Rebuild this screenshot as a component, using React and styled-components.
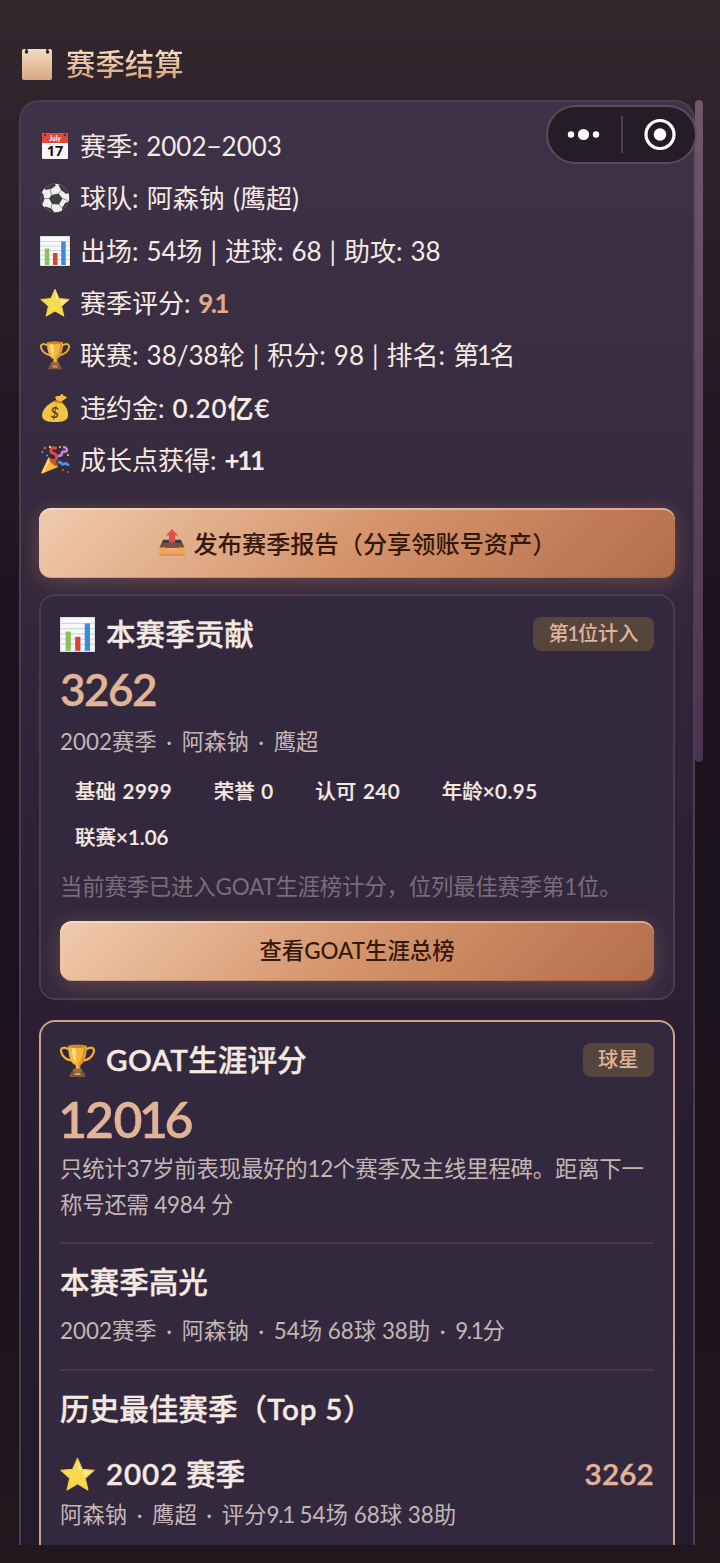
import React from 'react';
import styled, { createGlobalStyle } from 'styled-components';

const GlobalStyle = createGlobalStyle`
  * { box-sizing: border-box; }

  body {
    margin: 0;
    background: #21161d;
    font-family: Lato, 'Noto Sans CJK SC', sans-serif;
    color: #f6e9e2;
    -webkit-font-smoothing: antialiased;
  }
`;

const Page = styled.div`
  height: 1563px;
  padding: 42px 17px 18px 19px;
  display: flex;
  flex-direction: column;
  overflow: hidden;
  background: linear-gradient(180deg, #33272e 0%, #2f232b 8%, #241a24 24%, #1c131e 40%, #1a121d 62%, #1e131c 82%, #23171e 100%);
`;

const PageTitle = styled.h1`
  display: flex;
  align-items: center;
  gap: 14px;
  height: 44px;
  margin: 0 0 14px 3px;
  font-size: 29.4px;
  font-weight: 500;
  line-height: 44px;

  span {
    background: linear-gradient(180deg, #f6dcc0 20%, #d9a27e 85%);
    background-clip: text;
    color: transparent;
  }
`;

const Body = styled.div`
  flex: 1;
  min-height: 0;
  display: flex;
`;

const Panel = styled.main`
  width: 676px;
  padding: 18px 18px 0;
  overflow: hidden;
  border: 2px solid #4a3e50;
  border-bottom: 0;
  border-radius: 20px 20px 0 0;
  background: linear-gradient(180deg, #3d3247 0%, #382c41 22%, #33273c 35%, #2f2036 50%, #2b1e32 64%, #261b30 80%, #241b2e 100%);
`;

const ScrollThumb = styled.div`
  width: 8px;
  height: 662px;
  border-radius: 4px;
  background: linear-gradient(180deg, #73566b, #4b3250);
`;

const Capsule = styled.div`
  position: absolute;
  top: 105px;
  left: 546px;
  width: 151px;
  height: 59px;
  border: 2px solid #584d5a;
  border-radius: 30px;
  background: #241d27;
`;

const StatList = styled.ul`
  list-style: none;
  margin: 0;
  padding: 0 0 0 1px;
`;

const StatRow = styled.li`
  display: flex;
  align-items: center;
  gap: 10px;
  height: 52.3px;
  font-size: 26px;
  line-height: 52px;
  white-space: pre;
  word-spacing: ${(p) => p.$space}px;
`;

const Strong = styled.b`
  font-weight: ${(p) => p.$weight || 700};
  color: ${(p) => p.$color || 'inherit'};
  letter-spacing: ${(p) => p.$track || 0}px;
`;

/* latin glyphs inside chinese text, a step heavier than their neighbours */
const Num = styled.span`
  font-weight: 600;
  letter-spacing: ${(p) => p.$track || 0}px;
`;

const Track = styled.span`
  letter-spacing: ${(p) => p.$by}px;
`;

const One = styled.span`
  margin: 0 ${(p) => p.$by}px;
`;

const Button = styled.button`
  display: flex;
  align-items: center;
  justify-content: center;
  gap: 8px;
  width: 100%;
  height: ${(p) => p.$height}px;
  margin: ${(p) => p.$margin};
  padding: 0 0 ${(p) => p.$lift}px;
  border: 0;
  border-radius: 12px;
  font-family: inherit;
  font-size: ${(p) => p.$size}px;
  font-weight: 500;
  color: #35180c;
  background: linear-gradient(135deg, #f0cbae 0%, #d5946b 50%, #b46d4a 100%);
  box-shadow: 0 6px 26px rgba(213, 148, 107, 0.24), 0 0 20px rgba(213, 148, 107, 0.1),
    inset 0 2px 0 rgba(255, 240, 230, 0.42), inset 0 -1px 0 rgba(120, 60, 50, 0.2);
`;

const Card = styled.section`
  height: ${(p) => p.$height}px;
  margin-bottom: 20px;
  padding: 14px 19px 0;
  border: 2px solid ${(p) => (p.$accent ? '#cfa28a' : '#493c4e')};
  border-radius: 16px;
  background: ${(p) => (p.$accent ? '#33293e' : 'rgba(51, 42, 64, 0.88)')};
`;

const CardHead = styled.header`
  display: flex;
  align-items: center;
  justify-content: space-between;
  height: ${(p) => p.$height || 48}px;
  margin-top: ${(p) => p.$top || 0}px;
`;

const Heading = styled.h2`
  display: flex;
  align-items: center;
  gap: 11px;
  margin: 0;
  font-size: 29.6px;
  font-weight: 500;
  line-height: 44px;
  white-space: pre;
  -webkit-text-stroke: 0.35px currentColor;
`;

const Badge = styled.span`
  height: 34px;
  padding: 0 15.5px;
  border-radius: 8px;
  font-size: 20.2px;
  font-weight: 500;
  line-height: 32px;
  color: #e2b497;
  background: #55453d;
`;

const Score = styled.div`
  height: ${(p) => p.$height}px;
  margin-bottom: ${(p) => p.$gap || 0}px;
  font-size: ${(p) => p.$size}px;
  line-height: ${(p) => p.$height}px;
  font-weight: 600;
  letter-spacing: ${(p) => p.$track}px;
  color: #e2b497;
  -webkit-text-stroke: 0.4px currentColor;
`;

const Text = styled.p`
  margin: ${(p) => p.$margin || 0};
  font-size: 22.4px;
  line-height: 36px;
  letter-spacing: ${(p) => p.$track || 0}px;
  white-space: pre;
  color: ${(p) => (p.$muted ? '#7c6c7a' : '#c5b6b5')};
`;

const Middot = styled.span`
  margin: 0 3.8px;
`;

const Chips = styled.div`
  display: flex;
  flex-wrap: wrap;
  column-gap: 11.6px;
  row-gap: 12px;
  margin-top: 14px;
`;

const Chip = styled.span`
  padding: 0 15px;
  font-size: 20.5px;
  font-weight: 500;
  line-height: 34px;
  word-spacing: 1.4px;
  -webkit-text-stroke: 0.2px currentColor;
`;

const Divider = styled.hr`
  height: 2px;
  margin: ${(p) => p.$margin};
  border: 0;
  background: #43384d;
`;

const Svg = ({ size = 30, children }) => (
  <svg width={size} height={size} viewBox="0 0 30 30" fill="none">
    {children}
  </svg>
);

const CalendarGold = () => (
  <svg width="30" height="32" viewBox="0 0 30 32">
    <defs>
      <linearGradient id="gold" x1="0" y1="0" x2="0" y2="1">
        <stop offset="0" stopColor="#f3dcc0" />
        <stop offset="1" stopColor="#dba783" />
      </linearGradient>
    </defs>
    <rect y="1" width="30" height="31" rx="2" fill="url(#gold)" />
    <path d="M4.5 0v3M25.5 0v3" stroke="#33262d" strokeWidth="2" />
    <circle cx="4.5" cy="4" r="1.8" fill="#33262d" />
    <circle cx="25.5" cy="4" r="1.8" fill="#33262d" />
  </svg>
);

const Calendar = () => (
  <Svg>
    <rect x="2" y="2" width="26" height="26" rx="1" fill="#f8f6f7" />
    <path d="M2 3a1 1 0 0 1 1-1h24a1 1 0 0 1 1 1v9H2z" fill="#df493e" />
    <circle cx="5" cy="4" r="1.3" fill="#7e2826" />
    <circle cx="25" cy="4" r="1.3" fill="#7e2826" />
    <text x="15" y="9.6" fontSize="6.5" fontWeight="700" textAnchor="middle" fill="#fff">July</text>
    <text x="15" y="25" fontSize="14.5" fontWeight="700" fontFamily="Open Sans" textAnchor="middle" fill="#161318">17</text>
  </Svg>
);

const Ball = () => (
  <Svg>
    <defs>
      <clipPath id="ball"><circle cx="15" cy="15" r="14.4" /></clipPath>
    </defs>
    <g clipPath="url(#ball)">
      <circle cx="15" cy="15" r="14.4" fill="#f1eff1" />
      <path d="M11.500 12l7-1.500 4 5-3.500 6-7-.5-3-5.500z" fill="#403f42" />
      <path d="M4 5l5-4.500 5-.5 2 2.500-4 3L6 7zM18 1l7 2 4 7-3 1-5-4zM0 11l3-1 1.500 6-2 5L0 20zM5.500 23.500l6 2 3 4-7 1-5-5zM22 25l3-5 4.500-2-1 7-6 5z" fill="#403f42" />
      <path d="M11.500 12L10 6M18.500 10.500L21.500 7M22.500 15.500l5 2M19 21.500l3 3.500M12 21l-1 4.500M9 15.500H4" stroke="#8f8c90" />
    </g>
  </Svg>
);

const Chart = ({ size }) => (
  <Svg size={size}>
    <rect x=".5" y=".5" width="29" height="29" fill="#fafafa" />
    <path d="M1 5.500h28M1 10h28M1 14.500h28M1 19h28M1 23.500h28" stroke="#cfd8dc" />
    <path d="M.5 .5h29v29H.5z" stroke="#dde1e5" />
    <rect x="4.800" y="12.500" width="4.500" height="16.500" fill="#8fbe5c" />
    <rect x="13" y="17" width="4.500" height="12" fill="#d9423b" />
    <rect x="21.200" y="5.500" width="4.500" height="23.500" fill="#3d8bdb" />
  </Svg>
);

const Star = ({ size }) => (
  <Svg size={size}>
    <path d="M15 1.200l4.100 9.300 10.100 1-7.600 6.700 2.300 10L15 23l-8.900 5.200 2.300-10L.8 11.500l10.100-1z" fill="#f8da4e" stroke="#f5cb3f" strokeWidth="1" strokeLinejoin="round" />
    <path d="M15.500 3.500l2.800 7.600c-1.500 2-2.500-.5-2.800-7.600z" fill="#fff4ae" />
    <path d="M19.500 11.500l8.500.5-6.800 5.500z" fill="#fbe98a" />
  </Svg>
);

const Trophy = ({ size }) => (
  <Svg size={size}>
    <path d="M7.500 5.500C3 2.500 0 4.500 1.200 8.200c1 3.200 4 6 9 7M22.500 5.500c4.500-3 7.500-1 6.300 2.700-1 3.200-4 6-9 7" stroke="#f0ad36" strokeWidth="1.900" />
    <path d="M7 2.500c0 10 3 15.500 6.500 16.500v5h3v-5C20 18 23 12.500 23 2.500z" fill="#f5b43c" />
    <path d="M10 4.500c.2 6 1.500 10 3.200 12 .8-2 .8-8 .3-12z" fill="#fbdc86" />
    <path d="M20 4c0 7-2 11-4 13.500v5l1.500-.5v-3C20.500 17 22 12 22 4z" fill="#df8f27" />
    <ellipse cx="15" cy="2.700" rx="8" ry="1.500" fill="#cf8526" />
    <path d="M11.500 22h7l1 3h-9z" fill="#9a6847" />
    <path d="M9.500 25h11l1.500 4.200H8z" fill="#825340" />
    <rect x="12.500" y="25.500" width="5" height="2" fill="#d9a34a" />
  </Svg>
);

const MoneyBag = () => (
  <Svg>
    <path d="M15 4c2-2 4.500 0 5.500-2 1.200-1.800 3-1 3 1 2.500-.5 4 1 2.500 2.500-2 1-2.500 2-5.500 3.500l-4-1.500z" fill="#f3bd3d" />
    <path d="M14.500 8l7 1.500C26 12.500 28.500 18 28 23c-.5 5-6 6-13 6S2 28 2 22.500C2 16.500 8 11 14.500 8z" fill="#f6c445" />
    <path d="M14.500 8.500l7.500 1.300" stroke="#d18f28" strokeWidth="1.800" strokeLinecap="round" />
    <text x="14.500" y="25" fontSize="15" fontWeight="600" textAnchor="middle" fill="#5d4428" transform="rotate(6 14.500 20)">$</text>
  </Svg>
);

const Party = () => (
  <Svg>
    <path d="M8.500 12.500C12 13 17.500 18 18 22L2.500 28.500c-1 .3-1.600-.4-1.200-1.300z" fill="#f6b73c" />
    <path d="M8.500 12.500l2 2-6 12.500-3 1.200z" fill="#fbd674" />
    <path d="M9 13c3-1 9 5 8.500 8.500-4-.5-8-4.500-8.500-8.500z" fill="#a9622d" />
    <path d="M13 16c4-1 5-5 2-7-3-1.500-5-1-4-4 1-2.500 4-3 5.500-1" stroke="#df4b42" strokeWidth="3" />
    <path d="M18 11c3 0 4-1 4-3 0-3 4 0 5-2.500 0-2-2-3.500-4-3.500" stroke="#c78bd6" strokeWidth="2.600" />
    <path d="M18 18c3-3 3.500 3 6 1s3 2 5 0" stroke="#3e9be0" strokeWidth="2.800" />
    <g fill="#4da7e6"><circle cx="2.500" cy="7" r="1.100" /><circle cx="7" cy="10.500" r="1" /></g>
    <g fill="#e65249"><circle cx="5" cy="3" r="1.300" /><circle cx="23" cy="25" r="1.100" /><circle cx="28" cy="27" r="1" /></g>
    <g fill="#f4cd48"><circle cx="10" cy="2" r="1.200" /><circle cx="28" cy="10" r="1.100" /><circle cx="20" cy="2" r="1" /></g>
  </Svg>
);

const Outbox = () => (
  <Svg size={28}>
    <path d="M5.500 12.500h19l4 9h-27z" fill="#463b3a" />
    <path d="M5 16h20l3 5.500H2z" fill="#7b5240" />
    <path d="M1 21h7.500l2.500 3h8l2.500-3H29v8.500H1z" fill="#f0a45c" />
    <path d="M1 28h28v1.500H1z" fill="#db8b49" />
    <path d="M15 1l6.500 7h-3.300v7.500h-6.400V8H8.500z" fill="#df5148" />
  </Svg>
);

const CapsuleIcons = () => (
  <svg width="147" height="55" viewBox="548 107 147 55" fill="#fff">
    <circle cx="571" cy="134.500" r="3.200" />
    <circle cx="583.500" cy="134.500" r="5.600" />
    <circle cx="596" cy="134.500" r="3.200" />
    <rect x="621" y="116" width="2" height="37" fill="#4b424e" />
    <circle cx="660" cy="134.500" r="14" fill="none" stroke="#fff" strokeWidth="3.200" />
    <circle cx="660" cy="134.500" r="6.200" />
  </svg>
);

const Dot = () => <Middot> · </Middot>;

const App = () => {
  const stats = [
    { icon: <Calendar />, space: 1, text: <>赛季: 2002−2003</> },
    { icon: <Ball />, space: 1.6, text: <>球队: 阿森钠 (鹰超)</> },
    { icon: <Chart />, space: 1.3, text: <>出场: 54场 | 进球: 68 | 助攻: 38</> },
    { icon: <Star />, space: 1, text: <>赛季评分: <Strong $color="#e0ab8d" $track={-2.4}>9.1</Strong></> },
    { icon: <Trophy />, space: 1.4, text: <>联赛: 38/38轮 | 积分: 98 | 排名: 第<One $by={-2.4}>1</One>名</> },
    { icon: <MoneyBag />, space: 1.4, text: <>违约金: <Strong $weight={600} $track={0.9}>0.20亿€</Strong></> },
    { icon: <Party />, space: 1.4, text: <>成长点获得: <Strong $track={-2.4}>+11</Strong></> },
  ];
  const chips = [
    ['基础 ', '2999'],
    ['荣誉 ', '0'],
    ['认可 ', '240'],
    ['年龄', '×0.95'],
    ['联赛', '×1.06', 0],
  ];

  return (
    <Page>
      <GlobalStyle />
      <PageTitle>
        <CalendarGold />
        <span>赛季结算</span>
      </PageTitle>

      <Body>
        <Panel>
          <StatList>
            {stats.map((row, i) => (
              <StatRow key={i} $space={row.space}>
                {row.icon}
                <div>{row.text}</div>
              </StatRow>
            ))}
          </StatList>

          <Button $height={70} $size={24.2} $lift={2} $margin="22px 0 16px">
            <Outbox />
            发布赛季报告（分享领账号资产）
          </Button>

          <Card $height={406}>
            <CardHead>
              <Heading><Chart size={35} />本赛季贡献</Heading>
              <Badge>第<One $by={-1.3}>1</One>位计入</Badge>
            </CardHead>
            <Score $height={62} $gap={4} $size={44} $track={-1.5}>3262</Score>
            <Text>2002赛季<Dot />阿森钠<Dot />鹰超</Text>
            <Chips>
              {chips.map(([label, value, track = 0.5]) => (
                <Chip key={label}>{label}<Num $track={track}>{value}</Num></Chip>
              ))}
            </Chips>
            <Text $muted $track={-0.18} $margin="15px 0 16px">当前赛季已进入GOAT生涯榜计分，位列最佳赛季第1位。</Text>
            <Button $height={60} $size={22.4} $lift={4} $margin="0">查看GOAT生涯总榜</Button>
          </Card>

          <Card $accent $height={620}>
            <CardHead>
              <Heading><Trophy size={35} /><span><Num $track={0.4}>GOAT</Num>生涯评分</span></Heading>
              <Badge>球星</Badge>
            </CardHead>
            <Score $height={71} $gap={-4} $size={50} $track={-0.4}>
              <One $by={-1.8}>1</One>20<One $by={-3.2}>1</One>6
            </Score>
            <Text $track={-0.2}>
              {'只统计37岁前表现最好的12个赛季及主线里程碑。距离下一\n称号还需 4984 分'}
            </Text>
            <Divider $margin="19px 0 16px" />
            <Heading>本赛季高光</Heading>
            <Text $margin="9px 0 0">
              2002赛季<Dot />阿森钠<Dot />54场 68球 38助<Dot /><Track $by={-1.3}>9.1</Track>分
            </Text>
            <Divider $margin="20px 0 16px" />
            <Heading><span>历史最佳赛季（<Num $track={0.8}>Top 5</Num>）</span></Heading>
            <CardHead $height={46} $top={20}>
              <Heading><Star size={35} /><span><Num $track={0.8}>2002 </Num>赛季</span></Heading>
              <Score $height={44} $size={29.6} $track={0.2}>3262</Score>
            </CardHead>
            <Text>阿森钠<Dot />鹰超<Dot />评分<Track $by={-1.3}>9.1</Track> 54场 68球 38助</Text>
          </Card>
        </Panel>
        <ScrollThumb />
      </Body>

      <Capsule>
        <CapsuleIcons />
      </Capsule>
    </Page>
  );
};

export default App;
